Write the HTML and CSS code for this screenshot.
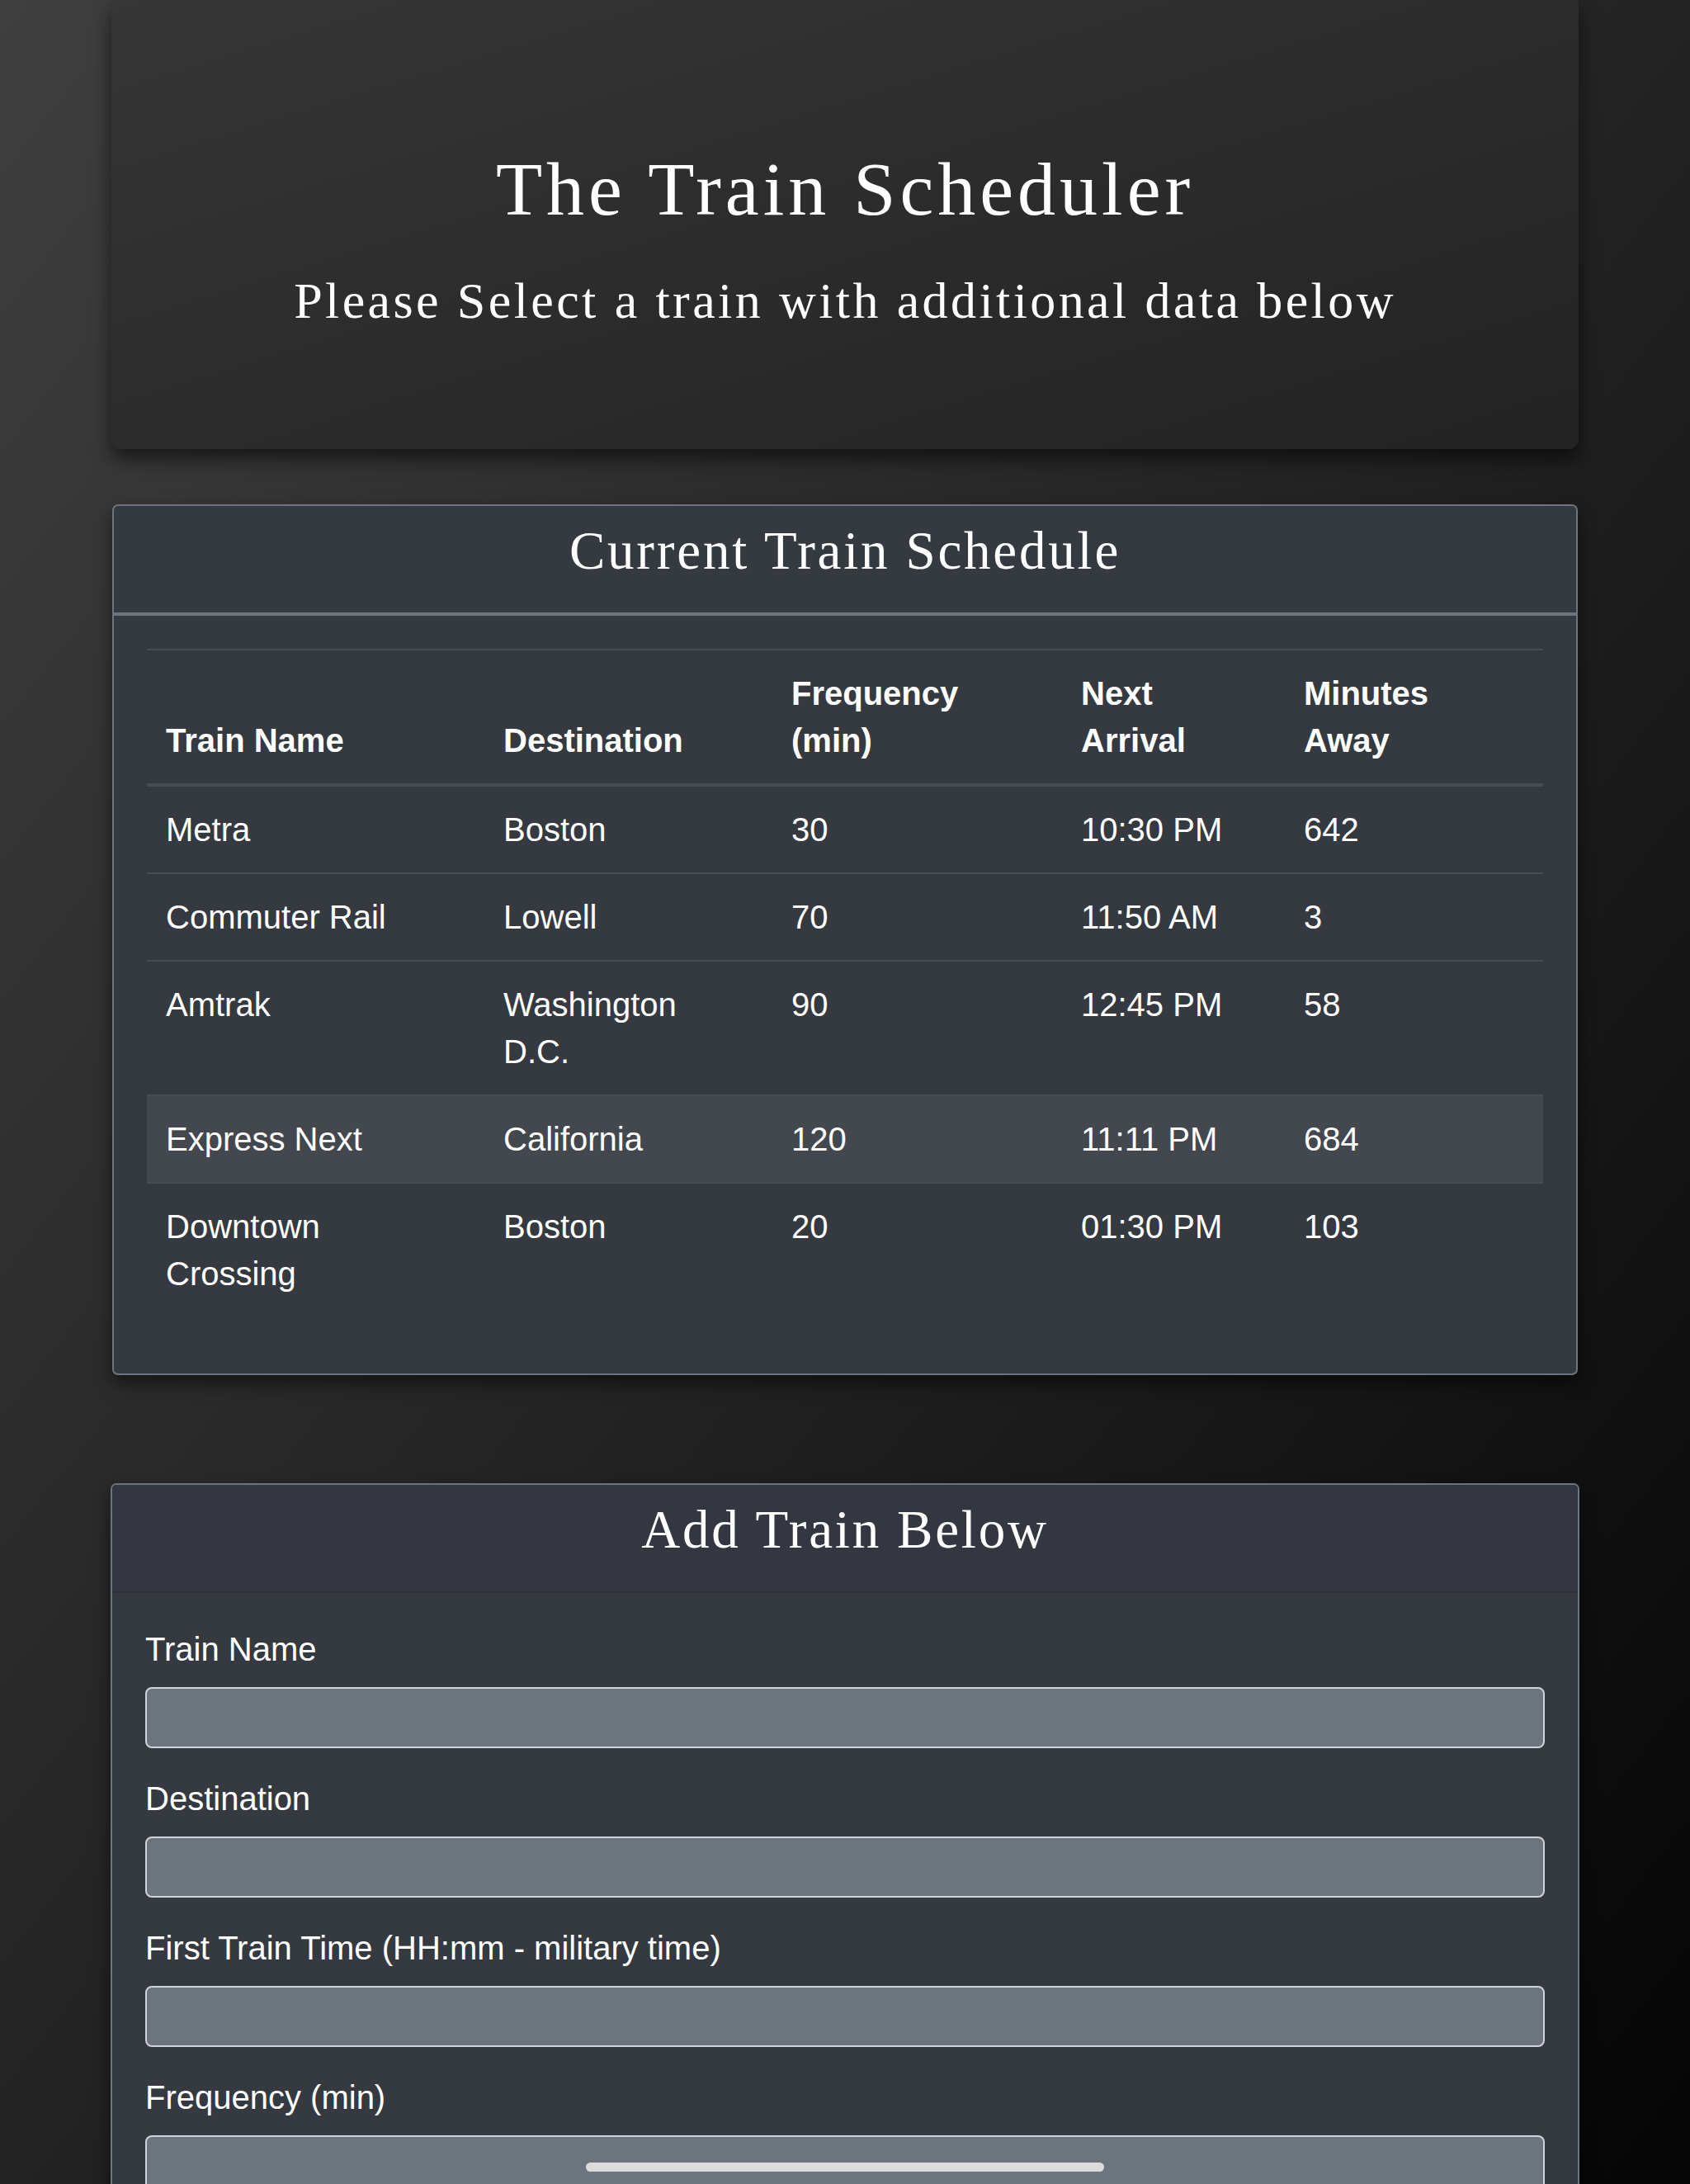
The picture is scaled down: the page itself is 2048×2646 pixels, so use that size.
FILE: index.html
```html
<!DOCTYPE html>
<html lang="en">
<head>
<meta charset="utf-8">
<title>The Train Scheduler</title>
<link rel="stylesheet" href="styles.css">
</head>
<body>
<div class="page">
  <header class="hero">
    <h1 class="hero-title">The Train Scheduler</h1>
    <p class="hero-sub">Please Select a train with additional data below</p>
  </header>

  <section class="card card-schedule">
    <div class="card-head card-head-schedule">
      <h2 class="card-title">Current Train Schedule</h2>
    </div>
    <div class="card-body">
      <table class="trains">
        <colgroup>
          <col class="c-name"><col class="c-dest"><col class="c-freq"><col class="c-next"><col class="c-min">
        </colgroup>
        <thead>
          <tr>
            <th>Train Name</th>
            <th>Destination</th>
            <th>Frequency<br>(min)</th>
            <th>Next<br>Arrival</th>
            <th>Minutes<br>Away</th>
          </tr>
        </thead>
        <tbody>
          <tr><td>Metra</td><td>Boston</td><td>30</td><td>10:30 PM</td><td>642</td></tr>
          <tr><td>Commuter Rail</td><td>Lowell</td><td>70</td><td>11:50 AM</td><td>3</td></tr>
          <tr><td>Amtrak</td><td>Washington<br>D.C.</td><td>90</td><td>12:45 PM</td><td>58</td></tr>
          <tr class="is-hover"><td>Express Next</td><td>California</td><td>120</td><td>11:11 PM</td><td>684</td></tr>
          <tr><td>Downtown<br>Crossing</td><td>Boston</td><td>20</td><td>01:30 PM</td><td>103</td></tr>
        </tbody>
      </table>
    </div>
  </section>

  <section class="card card-add">
    <div class="card-head card-head-add">
      <h2 class="card-title">Add Train Below</h2>
    </div>
    <form class="card-body add-form">
      <div class="field">
        <label class="field-label" for="train-name">Train Name</label>
        <input class="field-input" id="train-name" type="text">
      </div>
      <div class="field">
        <label class="field-label" for="destination">Destination</label>
        <input class="field-input" id="destination" type="text">
      </div>
      <div class="field">
        <label class="field-label" for="first-time">First Train Time (HH:mm - military time)</label>
        <input class="field-input" id="first-time" type="text">
      </div>
      <div class="field">
        <label class="field-label" for="frequency">Frequency (min)</label>
        <input class="field-input" id="frequency" type="text">
      </div>
      <button class="submit-btn" type="submit">Submit</button>
    </form>
  </section>
</div>
<div class="home-indicator"></div>
</body>
</html>
```

FILE: styles.css
```css
html {
  background: linear-gradient(to bottom right, #3f3f3f 0%, #262626 45%, #1a1a1a 65%, #050505 100%);
  background-attachment: fixed;
  min-height: 100%;
}

body {
  margin: 0;
  color: #fff;
  font-family: "Liberation Sans", Arial, sans-serif;
  font-size: 40px;
  line-height: 57px;
}

.page {
  width: 1780px;
  margin-left: 134px;
  padding-bottom: 200px;
}

/* Hero */
.hero {
  margin: 0 1px 67px;
  padding: 174px 40px 142px;
  text-align: center;
  border-radius: 0 0 12px 12px;
  background: linear-gradient(to bottom right, #363636 0%, #2c2c2c 50%, #232323 100%);
  box-shadow: 0 12px 22px rgba(0, 0, 0, 0.55);
}

.hero-title {
  margin: 0 0 43px;
  font-family: "Liberation Serif", "Times New Roman", serif;
  font-weight: 400;
  font-size: 92px;
  line-height: 1.2;
  letter-spacing: 5px;
}

.hero-sub {
  margin: 0;
  font-family: "Liberation Serif", "Times New Roman", serif;
  font-size: 62px;
  line-height: 1.2;
  letter-spacing: 3.4px;
}

/* Cards */
.card {
  border: 2px solid #6c757d;
  border-radius: 7px;
  background: #343a40;
  box-shadow: 0 10px 20px rgba(0, 0, 0, 0.5);
  overflow: hidden;
}

.card-schedule {
  margin: 0 2px 131px;
}

.card-head {
  padding: 15px 40px 36px;
  text-align: center;
}

.card-head-schedule {
  border-bottom: 4px solid #6c757d;
}

.card-head-add {
  background: #343741;
  border-bottom: 2px solid #2d3137;
}

.card-title {
  margin: 0;
  font-family: "Liberation Serif", "Times New Roman", serif;
  font-weight: 400;
  font-size: 65px;
  line-height: 1.2;
  letter-spacing: 2.8px;
}

.card-body {
  padding: 40px 40px 40px;
}

/* Table */
.trains {
  width: 100%;
  margin-bottom: 29px;
  border-collapse: collapse;
  table-layout: fixed;
}

.c-name { width: 409px; }
.c-dest { width: 349px; }
.c-freq { width: 351px; }
.c-next { width: 270px; }
.c-min  { width: 313px; }

.trains th,
.trains td {
  padding: 24px 23px 23px;
  text-align: left;
  vertical-align: top;
  border-top: 2px solid #454d55;
}

.trains th {
  font-weight: 700;
  vertical-align: bottom;
  border-bottom: 4px solid #454d55;
}

.trains tbody tr:first-child td {
  border-top: 0;
}

.trains tr.is-hover td {
  background: rgba(255, 255, 255, 0.075);
}

/* Form */
.field {
  margin-bottom: 33px;
}

.field-label {
  display: block;
  margin-bottom: 17px;
}

.field-input {
  display: block;
  box-sizing: border-box;
  width: 100%;
  height: 74px;
  padding: 0 18px;
  border: 2px solid #ced4da;
  border-radius: 8px;
  background: #6c757d;
  color: #fff;
  font: inherit;
}

.submit-btn {
  padding: 14px 28px;
  border: 2px solid #6c757d;
  border-radius: 8px;
  background: #6c757d;
  color: #fff;
  font: inherit;
}

/* iOS home indicator overlay */
.home-indicator {
  position: fixed;
  left: 50%;
  bottom: 15px;
  width: 628px;
  height: 11px;
  margin-left: -314px;
  border-radius: 6px;
  background: #dcdcdc;
}
```
